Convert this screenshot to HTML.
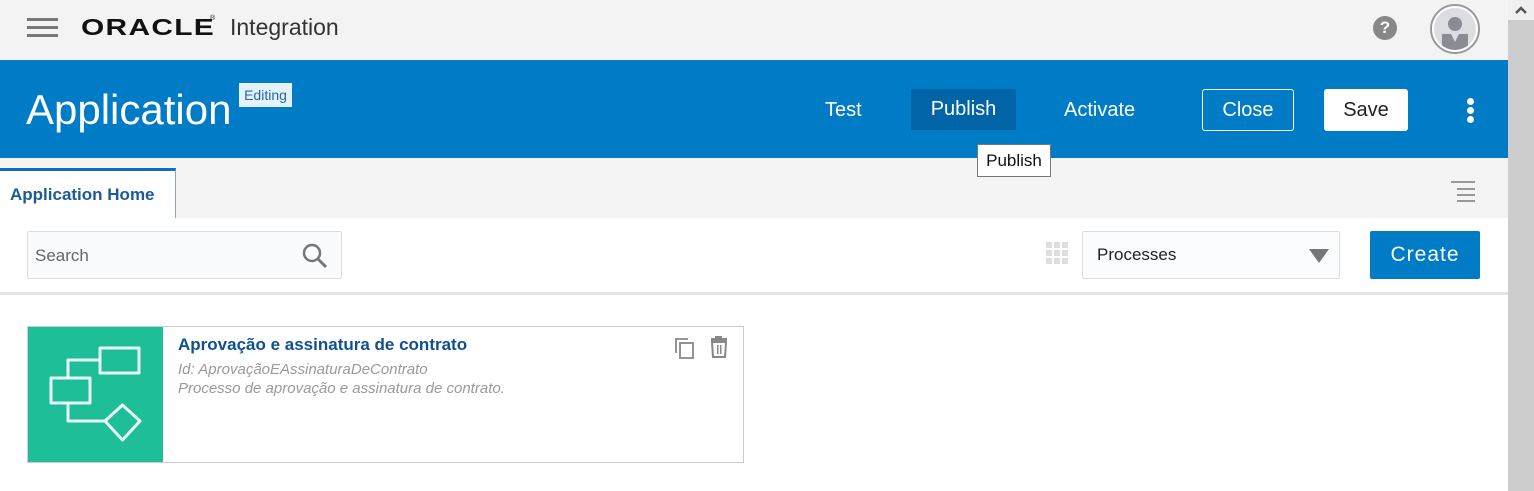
<!DOCTYPE html>
<html><head><meta charset="utf-8"><style>
*{box-sizing:border-box;margin:0;padding:0}
body{width:1534px;height:491px;overflow:hidden;background:#fff;font-family:"Liberation Sans",sans-serif;position:relative}
.a{position:absolute}
</style></head><body>
<div class="a" style="left:0;top:0;width:1508px;height:60px;background:#f3f3f4"></div>
<div class="a" style="left:27px;top:18px;width:31px;height:3px;background:#777"></div>
<div class="a" style="left:27px;top:26px;width:31px;height:3px;background:#777"></div>
<div class="a" style="left:27px;top:34px;width:31px;height:3px;background:#777"></div>
<div class="a" style="left:81px;top:14px;font-size:23px;font-weight:bold;letter-spacing:1px;color:#111;transform:scaleX(1.3);transform-origin:left">ORACLE</div>
<div class="a" style="left:210px;top:15px;font-size:7px;color:#111">®</div>
<div class="a" style="left:230px;top:14px;font-size:23px;color:#333">Integration</div>
<div class="a" style="left:1373px;top:16px;width:24px;height:24px;border-radius:50%;background:#888;color:#fff;font-weight:bold;font-size:17px;text-align:center;line-height:24px">?</div>
<div class="a" style="left:1430px;top:4px;width:50px;height:50px;border-radius:50%;border:2px solid #999;background:#fff"></div>
<div class="a" style="left:1434px;top:8px;width:42px;height:42px;border-radius:50%;background:#dcdde0;overflow:hidden">
<div class="a" style="left:14px;top:9px;width:14px;height:14px;border-radius:50%;background:#8b8c93"></div>
<div class="a" style="left:8px;top:26px;width:26px;height:16px;background:#8b8c93"></div>
<div class="a" style="left:17px;top:26px;width:0;height:0;border-left:4px solid transparent;border-right:4px solid transparent;border-top:8px solid #dcdde0"></div>
</div>
<div class="a" style="left:0;top:60px;width:1508px;height:98px;background:#007bc5"></div>
<div class="a" style="left:26px;top:86px;font-size:42px;color:#fff">Application</div>
<div class="a" style="left:239px;top:83px;width:53px;height:24px;background:#e6f2fa;color:#1e69b0;font-size:14px;text-align:center;line-height:24px">Editing</div>
<div class="a" style="left:825px;top:99px;font-size:20px;color:#fff">Test</div>
<div class="a" style="left:911px;top:89px;width:105px;height:41px;background:#0064a6;color:#fff;font-size:20px;text-align:center;line-height:41px">Publish</div>
<div class="a" style="left:1064px;top:99px;font-size:20px;color:#fff">Activate</div>
<div class="a" style="left:1202px;top:89px;width:92px;height:42px;border:1px solid #fff;border-radius:3px;color:#fff;font-size:20px;text-align:center;line-height:40px">Close</div>
<div class="a" style="left:1324px;top:89px;width:84px;height:42px;background:#fff;border-radius:3px;color:#222;font-size:20px;text-align:center;line-height:42px">Save</div>
<div class="a" style="left:1467px;top:98px;width:7px;height:7px;border-radius:50%;background:#fff"></div>
<div class="a" style="left:1467px;top:107px;width:7px;height:7px;border-radius:50%;background:#fff"></div>
<div class="a" style="left:1467px;top:116px;width:7px;height:7px;border-radius:50%;background:#fff"></div>
<div class="a" style="left:0;top:158px;width:1508px;height:60px;background:#f4f4f5"></div>
<div class="a" style="left:0;top:168px;width:176px;height:50px;background:#fff;border-top:3px solid #0b6fc0;border-right:1px solid #8aa"></div>
<div class="a" style="left:10px;top:185px;font-size:17px;font-weight:bold;color:#1b5a98">Application Home</div>
<div class="a" style="left:977px;top:144px;width:74px;height:33px;background:#fff;border:1px solid #777;font-size:17px;text-align:center;line-height:31px;color:#111">Publish</div>
<div class="a" style="left:1451px;top:181px;width:24px;height:2px;background:#999"></div>
<div class="a" style="left:1457px;top:188px;width:18px;height:2px;background:#999"></div>
<div class="a" style="left:1457px;top:194px;width:18px;height:2px;background:#999"></div>
<div class="a" style="left:1457px;top:200px;width:18px;height:2px;background:#999"></div>
<div class="a" style="left:27px;top:231px;width:315px;height:48px;border:1px solid #ddd;border-radius:2px;background:#fafbfc"></div>
<div class="a" style="left:35px;top:246px;font-size:17px;color:#666">Search</div>
<svg class="a" style="left:302px;top:243px" width="26" height="26"><circle cx="10" cy="10" r="8" fill="none" stroke="#777" stroke-width="2.5"/><path d="M16 16L24 24" stroke="#777" stroke-width="3"/></svg>
<svg class="a" style="left:1046px;top:242px" width="22" height="22" fill="#ddd"><rect x="0" y="0" width="6" height="6"/><rect x="8" y="0" width="6" height="6"/><rect x="16" y="0" width="6" height="6"/><rect x="0" y="8" width="6" height="6"/><rect x="8" y="8" width="6" height="6"/><rect x="16" y="8" width="6" height="6"/><rect x="0" y="16" width="6" height="6"/><rect x="8" y="16" width="6" height="6"/><rect x="16" y="16" width="6" height="6"/></svg>
<div class="a" style="left:1082px;top:231px;width:258px;height:48px;border:1px solid #ddd;border-radius:2px;background:#fafcfe"></div>
<div class="a" style="left:1097px;top:245px;font-size:17px;color:#222">Processes</div>
<div class="a" style="left:1309px;top:249px;width:0;height:0;border-left:10px solid transparent;border-right:10px solid transparent;border-top:14px solid #777"></div>
<div class="a" style="left:1370px;top:231px;width:110px;height:48px;background:#007bc5;border-radius:2px;color:#fff;font-size:21px;text-align:center;line-height:48px;letter-spacing:1px">Create</div>
<div class="a" style="left:0;top:292px;width:1508px;height:3px;background:#e4e4e4"></div>
<div class="a" style="left:27px;top:326px;width:717px;height:137px;border:1px solid #ccc"></div>
<div class="a" style="left:28px;top:327px;width:135px;height:135px;background:#1dbe98"></div>
<svg class="a" style="left:28px;top:327px" width="135" height="135" fill="none" stroke="#fff" stroke-width="3" opacity="0.9" stroke-linejoin="round"><rect x="72" y="21" width="39" height="25"/><rect x="23" y="51" width="39" height="25"/><path d="M72 33H40V51M40 76V94H77M77 94L94.5 78 112 94 94.5 113Z"/></svg>
<div class="a" style="left:178px;top:335px;font-size:17px;font-weight:bold;color:#10508f">Aprovação e assinatura de contrato</div>
<div class="a" style="left:178px;top:361px;font-size:15px;font-style:italic;color:#9a9a9a">Id: AprovaçãoEAssinaturaDeContrato</div>
<div class="a" style="left:178px;top:380px;font-size:15px;font-style:italic;color:#9a9a9a">Processo de aprovação e assinatura de contrato.</div>
<svg class="a" style="left:673px;top:336px" width="24" height="24" fill="none" stroke="#888" stroke-width="1.8"><rect x="7" y="7" width="13" height="15"/><path d="M3 17V3H15"/></svg>
<svg class="a" style="left:709px;top:335px" width="20" height="24" fill="#888"><rect x="6" y="1" width="7" height="3"/><rect x="2" y="3" width="16" height="3"/><path d="M3 7H17L16 22H4Z" fill="none" stroke="#888" stroke-width="2"/><rect x="8" y="10" width="1.5" height="9"/><rect x="11" y="10" width="1.5" height="9"/></svg>
<div class="a" style="left:1508px;top:0;width:26px;height:491px;background:#cdcdcd"></div>
<div class="a" style="left:1508px;top:0;width:26px;height:20px;background:#f0f0f0"></div>
<svg class="a" style="left:1514px;top:5px" width="14" height="10"><path d="M2 8L7 3 12 8" stroke="#555" stroke-width="2.5" fill="none"/></svg>
</body></html>
